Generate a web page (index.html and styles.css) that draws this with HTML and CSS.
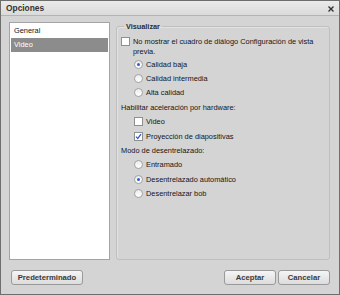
FILE: index.html
```html
<!DOCTYPE html>
<html lang="es">
<head>
    <meta charset="UTF-8">
    <title>Opciones</title>
    <link rel="stylesheet" href="styles.css">
</head>
<body>
    <div class="window">
        <div class="titlebar">
            <span class="title">Opciones</span>
            <span class="close">
                <svg width="6" height="6" viewBox="0 0 6 6"><path d="M0.5 0.5L5.5 5.5M5.5 0.5L0.5 5.5" stroke="#333" stroke-width="1.4"/></svg>
            </span>
        </div>
        <div class="main">
            <ul class="list">
                <li>General</li>
                <li class="selected">Video</li>
            </ul>
            <fieldset class="group">
                <legend>Visualizar</legend>
                <label class="check first">
                    <span class="box"></span>
                    <span class="wrap">No mostrar el cuadro de diálogo Configuración de vista previa.</span>
                </label>
                <div class="indent">
                    <label class="row"><span class="radio on"></span>Calidad baja</label>
                    <label class="row"><span class="radio"></span>Calidad intermedia</label>
                    <label class="row"><span class="radio"></span>Alta calidad</label>
                </div>
                <div class="row caption">Habilitar aceleración por hardware:</div>
                <div class="indent">
                    <label class="row"><span class="box"></span>Video</label>
                    <label class="row">
                        <span class="box">
                            <svg width="7" height="7" viewBox="0 0 7 7"><path d="M1 3.6L2.8 5.4L6 1.2" fill="none" stroke="#2f5fc4" stroke-width="1.3"/></svg>
                        </span>
                        Proyección de diapositivas
                    </label>
                </div>
                <div class="row caption">Modo de desentrelazado:</div>
                <div class="indent">
                    <label class="row"><span class="radio"></span>Entramado</label>
                    <label class="row"><span class="radio on"></span>Desentrelazado automático</label>
                    <label class="row"><span class="radio"></span>Desentrelazar bob</label>
                </div>
            </fieldset>
        </div>
        <div class="footer">
            <button class="btn wide">Predeterminado</button>
            <div class="spacer"></div>
            <button class="btn">Aceptar</button>
            <button class="btn">Cancelar</button>
        </div>
    </div>
</body>
</html>
```

FILE: styles.css
```css
body {
    margin: 0;
    padding: 0;
    font-family: 'Liberation Sans', Arial, sans-serif;
    font-size: 7.4px;
    color: #141414;
}
.window {
    width: 340px;
    height: 295px;
    box-sizing: border-box;
    border: 1px solid #6e6e6e;
    background-color: #d4d4d4;
}
.titlebar {
    height: 14px;
    display: flex;
    align-items: center;
    justify-content: space-between;
    padding: 0 5px 0 5px;
    background: linear-gradient(#ebebeb, #dadada);
    border-bottom: 1px solid #b4b4b4;
}
.title {
    font-weight: bold;
    font-size: 8.4px;
    color: #333;
}
.close {
    display: flex;
    margin-top: 1px;
}
.main {
    display: flex;
    gap: 6px;
    height: 238px;
    padding: 6px 9px 0 8px;
}
.list {
    list-style: none;
    margin: 0;
    padding: 1px 0 0 0;
    width: 101px;
    box-sizing: border-box;
    background-color: #fff;
    border: 1px solid #a4a4a4;
}
.list li {
    height: 14px;
    line-height: 14px;
    padding-left: 3px;
    margin: 0 1px;
}
.list li.selected {
    background-color: #8c8c8c;
    color: #fff;
}
.group {
    flex: 1;
    margin: 0;
    padding: 6px 4px 0 4px;
    border: 1px solid #bfbfbf;
    border-radius: 3px;
    box-shadow: inset 1px 1px 0 #e2e2e2;
    min-width: 0;
}
.group legend {
    font-weight: bold;
    font-size: 7.3px;
    line-height: 9px;
    padding: 0 2px;
    margin-left: 3px;
    color: #2a2a2a;
}
.check {
    display: flex;
    gap: 3px;
    line-height: 10px;
}
.row {
    display: flex;
    align-items: center;
    gap: 3px;
    height: 14.4px;
    white-space: nowrap;
}
.indent {
    padding-left: 13px;
}
.box {
    flex: none;
    width: 9px;
    height: 9px;
    box-sizing: border-box;
    border: 1px solid #8f8f8f;
    background-color: #fff;
    display: flex;
    align-items: center;
    justify-content: center;
}
.radio {
    flex: none;
    width: 9px;
    height: 9px;
    box-sizing: border-box;
    border: 1px solid #a2a2a2;
    border-radius: 50%;
    background: linear-gradient(#ececec, #ffffff);
    display: flex;
    align-items: center;
    justify-content: center;
}
.radio.on::after {
    content: '';
    width: 3px;
    height: 3px;
    border-radius: 50%;
    background-color: #2f5fd0;
}
.footer {
    display: flex;
    gap: 2px;
    padding: 10px 9px 0 10px;
}
.spacer {
    flex: 1;
}
.btn {
    width: 52px;
    height: 15px;
    padding: 0;
    font-family: 'Liberation Sans', Arial, sans-serif;
    font-weight: bold;
    font-size: 7.7px;
    color: #3a3a3a;
    border: 1px solid #9a9a9a;
    border-radius: 3px;
    background: linear-gradient(#f5f5f5, #dcdcdc);
}
.btn.wide {
    width: 72px;
}
```
